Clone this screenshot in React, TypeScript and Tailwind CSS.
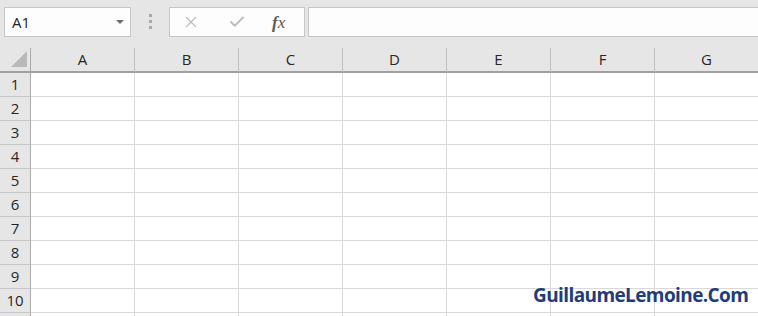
import { X, Check } from "lucide-react";

const cols = ["A", "B", "C", "D", "E", "F", "G"];
const rows = [1, 2, 3, 4, 5, 6, 7, 8, 9, 10, 11];

export default function App() {
  return (
    <div
      className="relative h-[316px] w-[758px] overflow-hidden bg-white text-[#262626]"
      style={{ fontFamily: '"Open Sans", "Noto Sans", sans-serif' }}
    >
      {/* formula bar */}
      <div className="flex h-[48px] items-start bg-[#e6e6e6] pt-[7px] pl-[4px]">
        <div className="flex h-[30px] w-[127px] items-center justify-between border border-[#c6c6c6] bg-[#fdfdfd] pl-[7px] pr-[6px]">
          <span className="text-[15px] leading-none">A1</span>
          <span className="h-0 w-0 border-x-[4px] border-t-[4px] border-x-transparent border-t-[#6d6d6d]" />
        </div>
        <div className="flex w-[38px] flex-col items-center gap-[3px] pt-[7px]">
          <span className="h-[3px] w-[3px] bg-[#a8a8a8]" />
          <span className="h-[3px] w-[3px] bg-[#a8a8a8]" />
          <span className="h-[3px] w-[3px] bg-[#a8a8a8]" />
        </div>
        <div className="flex h-[30px] w-[136px] items-center border border-[#c6c6c6] bg-[#fdfdfd]">
          <X className="ml-[12px] h-[18px] w-[18px] text-[#bdbdbd]" strokeWidth={1.6} />
          <Check className="ml-[28px] h-[18px] w-[18px] text-[#bdbdbd]" strokeWidth={2.6} />
          <span
            className="ml-[26px] text-[17px] italic leading-none text-[#5a5a5a]"
            style={{ fontFamily: '"Liberation Serif", serif' }}
          >
            <b className="font-bold">f</b>x
          </span>
        </div>
        <div className="ml-[3px] h-[30px] flex-1 border border-r-0 border-[#c6c6c6] bg-[#fdfdfd]" />
      </div>

      {/* sheet */}
      <div className="grid grid-cols-[31px_repeat(7,104px)]">
        <div className="relative h-[25px] border-r border-b-2 border-r-[#ababab] border-b-[#a0a0a0] bg-[#e6e6e6]">
          <span className="absolute bottom-[4px] right-[3px] h-0 w-0 border-b-[16px] border-l-[16px] border-b-[#b9b9b9] border-l-transparent" />
        </div>
        {cols.map((c) => (
          <div
            key={c}
            className="flex h-[25px] items-center justify-center border-r border-b-2 border-r-[#c0c0c0] border-b-[#a0a0a0] bg-[#e6e6e6] text-[15px]"
          >
            {c}
          </div>
        ))}
        {rows.map((r) => (
          <Row key={r} n={r} />
        ))}
      </div>

      <div
        className="absolute left-[533px] top-[281px] text-[19px] font-bold tracking-[-0.6px] text-[#1f3d7c]"
        style={{ fontFamily: '"Open Sans", sans-serif' }}
      >
        GuillaumeLemoine.Com
      </div>
    </div>
  );
}

function Row({ n }: { n: number }) {
  return (
    <>
      <div className="flex h-[24px] items-center justify-center border-r border-b border-r-[#ababab] border-b-[#c8c8c8] bg-[#e6e6e6] text-[15px]">
        {n <= 10 ? n : ""}
      </div>
      {cols.map((c) => (
        <div key={c} className="h-[24px] border-r border-b border-[#d9d9d9]" />
      ))}
    </>
  );
}
